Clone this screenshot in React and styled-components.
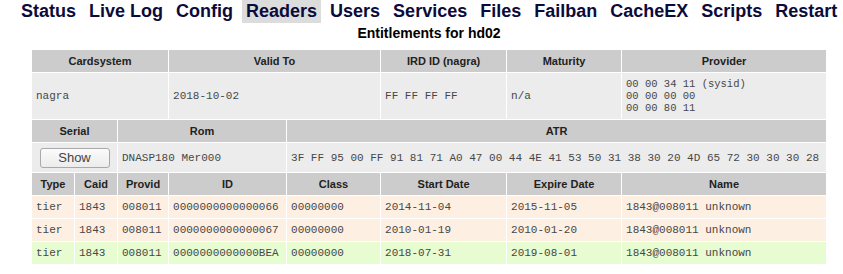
import React from "react";
import styled, { createGlobalStyle } from "styled-components";

const Global = createGlobalStyle`
  html, body { margin: 0; padding: 0; background: #fff; }
  body { font-family: "Liberation Sans", Arial, sans-serif; }
`;

const Menu = styled.nav`
  display: flex;
  gap: 5px;
  padding-left: 17px;
  height: 23px;
`;

const MenuItem = styled.a`
  display: block;
  padding: 0 4px;
  height: 23px;
  line-height: 22px;
  font-size: 18px;
  font-weight: bold;
  color: #0b0b3b;
  text-decoration: none;
  background: ${(p) => (p.$active ? "#dcdcdc" : "transparent")};
`;

const Title = styled.h1`
  margin: 2px 0 8px 31px;
  width: 796px;
  text-align: center;
  font-size: 14px;
  line-height: 16px;
  font-weight: bold;
  color: #000;
`;

const Table = styled.table`
  margin-left: 31px;
  width: 796px;
  table-layout: fixed;
  border-collapse: separate;
  border-spacing: 1px;
`;

const Head = styled.th`
  height: 22px;
  padding: 0 4px;
  background: #cccccc;
  color: #222;
  font-size: 11px;
  font-weight: bold;
  text-align: center;
  vertical-align: middle;
`;

const rowBg = {
  gray: "#ececec",
  peach: "#fdf0e3",
  green: "#e7fcd1",
};

const Cell = styled.td`
  height: ${(p) => p.$h || 22}px;
  padding: 0 4px;
  background: ${(p) => rowBg[p.$tone || "gray"]};
  color: #474747;
  font-family: "Liberation Mono", "Courier New", monospace;
  font-size: 11px;
  line-height: 14px;
  text-align: ${(p) => (p.$center ? "center" : "left")};
  vertical-align: middle;
  white-space: nowrap;
  overflow: hidden;
`;

const Line = styled.div`
  font-size: 10.5px;
  line-height: 12px;
  height: 12px;
`;

const ShowButton = styled.button`
  width: 70px;
  height: 20px;
  padding: 0;
  border: 1px solid #a9a9a9;
  border-radius: 3px;
  background: linear-gradient(#fbfbfb, #ececec);
  color: #444;
  font-family: "Liberation Sans", Arial, sans-serif;
  font-size: 13px;
  line-height: 18px;
`;

const menu = ["Status", "Live Log", "Config", "Readers", "Users", "Services", "Files", "Failban", "CacheEX", "Scripts", "Restart"];

const widths = [42, 42, 50, 117, 93, 125, 114, 204];

const providers = ["00 00 34 11 (sysid)", "00 00 00 00", "00 00 80 11"];

const entitlements = [
  { start: "2014-11-04", expire: "2015-11-05", id: "0000000000000066", tone: "peach" },
  { start: "2010-01-19", expire: "2010-01-20", id: "0000000000000067", tone: "peach" },
  { start: "2018-07-31", expire: "2019-08-01", id: "0000000000000BEA", tone: "green" },
];

export default function App() {
  return (
    <>
      <Global />
      <Menu>
        {menu.map((m) => (
          <MenuItem key={m} $active={m === "Readers"}>{m}</MenuItem>
        ))}
      </Menu>
      <Title>Entitlements for hd02</Title>
      <Table>
        <colgroup>
          {widths.map((w, i) => (
            <col key={i} style={{ width: w }} />
          ))}
        </colgroup>
        <tbody>
          <tr>
            <Head colSpan={3}>Cardsystem</Head>
            <Head colSpan={2}>Valid To</Head>
            <Head>IRD ID (nagra)</Head>
            <Head>Maturity</Head>
            <Head>Provider</Head>
          </tr>
          <tr>
            <Cell colSpan={3} $h={46}>nagra</Cell>
            <Cell colSpan={2} $h={46}>2018-10-02</Cell>
            <Cell $h={46}>FF FF FF FF</Cell>
            <Cell $h={46}>n/a</Cell>
            <Cell $h={46}>
              {providers.map((p) => (
                <Line key={p}>{p}</Line>
              ))}
            </Cell>
          </tr>
          <tr>
            <Head colSpan={2}>Serial</Head>
            <Head colSpan={2}>Rom</Head>
            <Head colSpan={4}>ATR</Head>
          </tr>
          <tr>
            <Cell colSpan={2} $h={29} $center>
              <ShowButton type="button">Show</ShowButton>
            </Cell>
            <Cell colSpan={2} $h={29}>DNASP180 Mer000</Cell>
            <Cell colSpan={4} $h={29}>
              3F FF 95 00 FF 91 81 71 A0 47 00 44 4E 41 53 50 31 38 30 20 4D 65 72 30 30 30 28
            </Cell>
          </tr>
          <tr>
            <Head>Type</Head>
            <Head>Caid</Head>
            <Head>Provid</Head>
            <Head>ID</Head>
            <Head>Class</Head>
            <Head>Start Date</Head>
            <Head>Expire Date</Head>
            <Head>Name</Head>
          </tr>
          {entitlements.map((e) => (
            <tr key={e.id}>
              <Cell $tone={e.tone}>tier</Cell>
              <Cell $tone={e.tone}>1843</Cell>
              <Cell $tone={e.tone}>008011</Cell>
              <Cell $tone={e.tone}>{e.id}</Cell>
              <Cell $tone={e.tone}>00000000</Cell>
              <Cell $tone={e.tone}>{e.start}</Cell>
              <Cell $tone={e.tone}>{e.expire}</Cell>
              <Cell $tone={e.tone}>1843@008011 unknown</Cell>
            </tr>
          ))}
        </tbody>
      </Table>
    </>
  );
}
